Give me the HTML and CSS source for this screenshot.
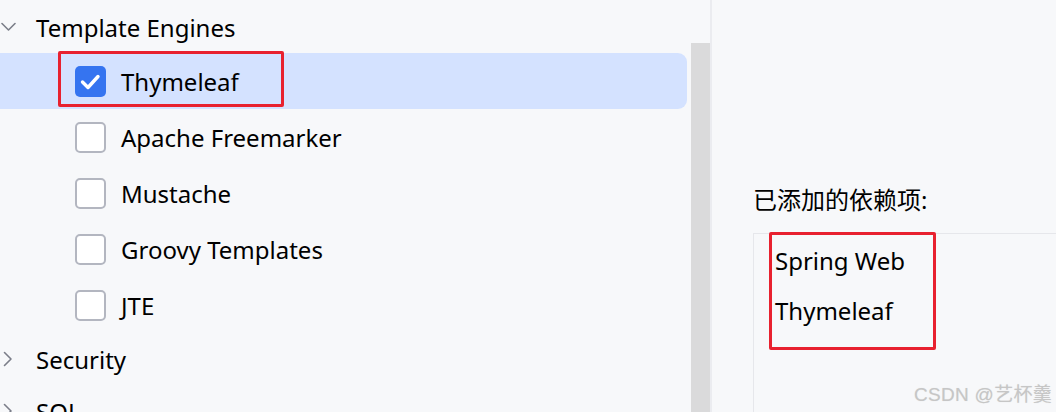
FILE: index.html
```html
<!DOCTYPE html>
<html lang="zh-CN">
<head>
<meta charset="utf-8">
<link rel="stylesheet" href="styles.css">
</head>
<body>
<div class="app">
  <div class="tree">
    <div class="tree-list">
      <div class="group-row">
        <svg class="chev" viewBox="0 0 16 16" width="16" height="16"><path d="M2 4.5 L8.5 11 L15 4.5" fill="none" stroke="#7b7e89" stroke-width="1.6" stroke-linecap="round" stroke-linejoin="round"/></svg>
        <span class="label">Template Engines</span>
      </div>
      <div class="item-row selected">
        <span class="cb checked"><svg viewBox="0 0 31 31" width="31" height="31"><path d="M7.5 16 L13 21.5 L23 10.5" fill="none" stroke="#fff" stroke-width="3.4" stroke-linecap="round" stroke-linejoin="round"/></svg></span>
        <span class="label">Thymeleaf</span>
      </div>
      <div class="item-row"><span class="cb"></span><span class="label">Apache Freemarker</span></div>
      <div class="item-row"><span class="cb"></span><span class="label">Mustache</span></div>
      <div class="item-row"><span class="cb"></span><span class="label">Groovy Templates</span></div>
      <div class="item-row"><span class="cb"></span><span class="label">JTE</span></div>
      <div class="group-row">
        <svg class="chev" viewBox="0 0 16 16" width="16" height="16"><path d="M4.5 1.5 L11 8 L4.5 14.5" fill="none" stroke="#7b7e89" stroke-width="1.6" stroke-linecap="round" stroke-linejoin="round"/></svg>
        <span class="label">Security</span>
      </div>
      <div class="group-row">
        <svg class="chev" viewBox="0 0 16 16" width="16" height="16"><path d="M4.5 1.5 L11 8 L4.5 14.5" fill="none" stroke="#7b7e89" stroke-width="1.6" stroke-linecap="round" stroke-linejoin="round"/></svg>
        <span class="label">SQL</span>
      </div>
    </div>
    <div class="scrollbar"><div class="thumb"></div></div>
  </div>
  <div class="divider"></div>
  <div class="side">
    <div class="side-title">已添加的依赖项:</div>
    <div class="deps">
      <div class="dep">Spring Web</div>
      <div class="dep">Thymeleaf</div>
    </div>
  </div>
</div>
<div class="mark mark-1"></div>
<div class="mark mark-2"></div>
<div class="watermark">CSDN @艺杯羹</div>
</body>
</html>
```
FILE: styles.css
```css
html, body {
  margin: 0;
  padding: 0;
  background: #f7f8fa;
  height: 412px;
  overflow: hidden;
}
body {
  font-family: "Noto Sans", "Noto Sans CJK SC", sans-serif;
  font-size: 24px;
  color: #000;
  position: relative;
}
.app {
  display: flex;
  height: 412px;
}
.tree {
  display: flex;
  width: 710px;
  flex: none;
}
.tree-list {
  width: 691px;
  padding-top: 1px;
  flex: none;
}
.group-row {
  height: 52px;
  display: flex;
  align-items: center;
}
.group-row .chev {
  width: 16px;
  height: 16px;
  margin-left: 0;
  margin-right: 20px;
  flex: none;
}
.item-row {
  height: 56px;
  display: flex;
  align-items: center;
  padding-left: 75px;
  margin-right: 4px;
}
.item-row.selected {
  background: #d4e2ff;
  border-radius: 0 9px 9px 0;
}
.label {
  line-height: 1;
  padding-top: 2px;
  white-space: nowrap;
}
.cb {
  width: 27px;
  height: 27px;
  border: 2px solid #b3b6c0;
  border-radius: 5px;
  background: #ffffff;
  margin-right: 15px;
  flex: none;
  display: flex;
}
.cb.checked {
  width: 31px;
  height: 31px;
  border: none;
  background: #3574f0;
}
.scrollbar {
  width: 19px;
  flex: none;
  padding-top: 43px;
}
.thumb {
  background: #dadadb;
  height: 100%;
}
.divider {
  width: 2px;
  background: #ebecf0;
  flex: none;
}
.side {
  flex: 1;
  padding-left: 41px;
  padding-top: 185px;
  min-width: 0;
}
.side-title {
  line-height: 30px;
  height: 30px;
  white-space: nowrap;
}
.deps {
  margin-top: 18px;
  border-top: 1px solid #e6e7eb;
  border-left: 1px solid #e6e7eb;
  height: 200px;
  padding-left: 21px;
  padding-top: 2px;
}
.dep {
  height: 50px;
  line-height: 50px;
  white-space: nowrap;
}
.mark {
  position: absolute;
  border: 3px solid #e8212f;
  border-radius: 2px;
  box-sizing: border-box;
}
.mark-1 {
  left: 58px;
  top: 51px;
  width: 226px;
  height: 56px;
}
.mark-2 {
  left: 769px;
  top: 232px;
  width: 167px;
  height: 118px;
}
.watermark {
  position: absolute;
  left: 914px;
  top: 379px;
  font-family: "Liberation Sans", "Noto Sans CJK SC", sans-serif;
  font-size: 19px;
  color: #c6c6c6;
  letter-spacing: 0.3px;
  text-shadow: 0 0 1px #e0e0e0;
}
```
